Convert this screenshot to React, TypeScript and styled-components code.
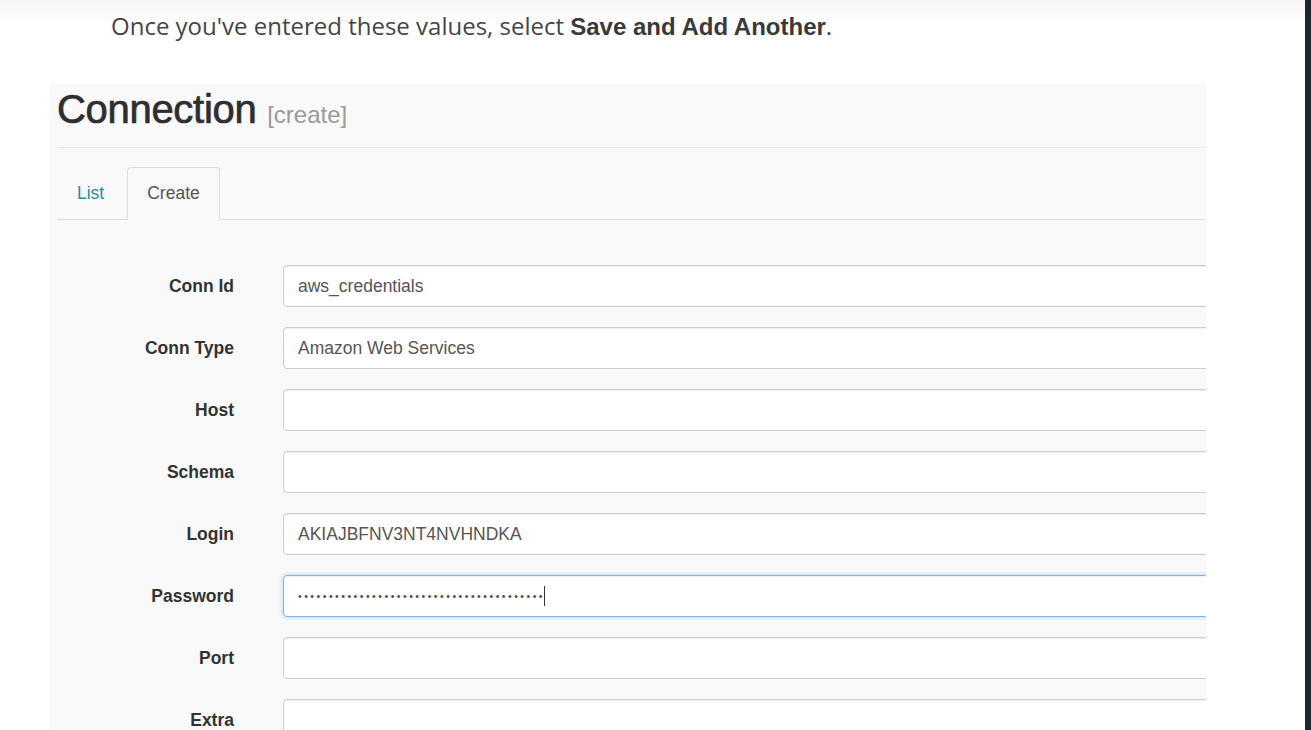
import React from "react";
import styled, { createGlobalStyle, css } from "styled-components";

const Global = createGlobalStyle`
  html, body { margin: 0; padding: 0; background: #ffffff; overflow: hidden; }
  * { box-sizing: border-box; }
`;

const Page = styled.div`
  display: flex;
  height: 730px;
  overflow: hidden;
`;

const Main = styled.main`
  flex: 1;
  display: flex;
  flex-direction: column;
  min-width: 0;
  background: linear-gradient(to bottom, #f6f6f6 0px, #ffffff 26px);
`;

const ScrollStrip = styled.div`
  width: 6px;
  flex: none;
  background: #1c262e;
`;

const Intro = styled.p`
  margin: 0;
  padding: 8px 0 0 111px;
  height: 84px;
  font-family: "Open Sans", sans-serif;
  font-size: 24px;
  line-height: 36px;
  color: #454545;
`;

const Strong = styled.strong`
  font-family: "Liberation Sans", Arial, sans-serif;
  font-weight: 700;
  font-size: 24px;
  color: #3a3a3a;
`;

const Figure = styled.section`
  flex: 1;
  margin-left: 50px;
  width: 1156px;
  background: #f9f9f9;
  padding-left: 7px;
  overflow: hidden;
  font-family: "Liberation Sans", Arial, sans-serif;
`;

const HeadingBar = styled.div`
  padding: 3px 0 10px;
  border-bottom: 1px solid #e8e8e8;
`;

const Title = styled.h1`
  margin: 0;
  font-size: 40px;
  line-height: 44px;
  font-weight: 400;
  color: #2e2e2e;
  -webkit-text-stroke: 0.7px #2e2e2e;
  letter-spacing: -0.3px;
`;

const Small = styled.small`
  font-size: 24px;
  color: #9a9a9a;
  -webkit-text-stroke: 0;
  letter-spacing: 0;
`;

const Tabs = styled.nav`
  display: flex;
  margin-top: 19px;
  border-bottom: 1px solid #dddddd;
`;

const Tab = styled.a<{ $active?: boolean }>`
  display: block;
  padding: 0 19px;
  margin-right: 3px;
  margin-bottom: -1px;
  line-height: 51px;
  font-size: 17.5px;
  border: 1px solid transparent;
  border-radius: 4px 4px 0 0;
  text-decoration: none;
  color: #2b8c96;
  ${(p) =>
    p.$active &&
    css`
      color: #555555;
      background: #f9f9f9;
      border-color: #dddddd;
      border-bottom-color: transparent;
    `}
`;

const Form = styled.div`
  display: flex;
  flex-direction: column;
  gap: 20px;
  padding-top: 45px;
`;

const Row = styled.div`
  display: grid;
  grid-template-columns: 177px 1000px;
  column-gap: 49px;
  align-items: center;
`;

const Label = styled.label`
  text-align: right;
  font-weight: 700;
  font-size: 17.5px;
  color: #333333;
`;

const Field = styled.div<{ $focused?: boolean }>`
  display: flex;
  align-items: center;
  height: 42px;
  padding: 0 14px;
  background: #ffffff;
  border: 1px solid #cccccc;
  border-radius: 4px;
  box-shadow: inset 0 1px 1px rgba(0, 0, 0, 0.06);
  font-size: 17.5px;
  color: #555555;
  ${(p) =>
    p.$focused &&
    css`
      border-color: #7fb6e6;
      box-shadow: inset 0 1px 1px rgba(0, 0, 0, 0.06), 0 0 5px rgba(102, 175, 233, 0.5);
    `}
`;

const Dots = styled.span`
  font-size: 10.5px;
  letter-spacing: 2.5px;
  color: #4a4a4a;
`;

const Caret = styled.span`
  display: inline-block;
  width: 1px;
  height: 20px;
  background: #333333;
  margin-left: -1px;
`;

const fields: { label: string; value?: string; password?: boolean }[] = [
  { label: "Conn Id", value: "aws_credentials" },
  { label: "Conn Type", value: "Amazon Web Services" },
  { label: "Host" },
  { label: "Schema" },
  { label: "Login", value: "AKIAJBFNV3NT4NVHNDKA" },
  { label: "Password", password: true },
  { label: "Port" },
  { label: "Extra" },
];

export default function App() {
  return (
    <Page>
      <Global />
      <Main>
        <Intro>
          Once you've entered these values, select <Strong>Save and Add Another</Strong>.
        </Intro>
        <Figure>
          <HeadingBar>
            <Title>
              Connection <Small>[create]</Small>
            </Title>
          </HeadingBar>
          <Tabs>
            <Tab href="#">List</Tab>
            <Tab href="#" $active>
              Create
            </Tab>
          </Tabs>
          <Form>
            {fields.map((f) => (
              <Row key={f.label}>
                <Label>{f.label}</Label>
                <Field $focused={f.password}>
                  {f.password ? (
                    <>
                      <Dots>{"•".repeat(40)}</Dots>
                      <Caret />
                    </>
                  ) : (
                    f.value
                  )}
                </Field>
              </Row>
            ))}
          </Form>
        </Figure>
      </Main>
      <ScrollStrip />
    </Page>
  );
}
